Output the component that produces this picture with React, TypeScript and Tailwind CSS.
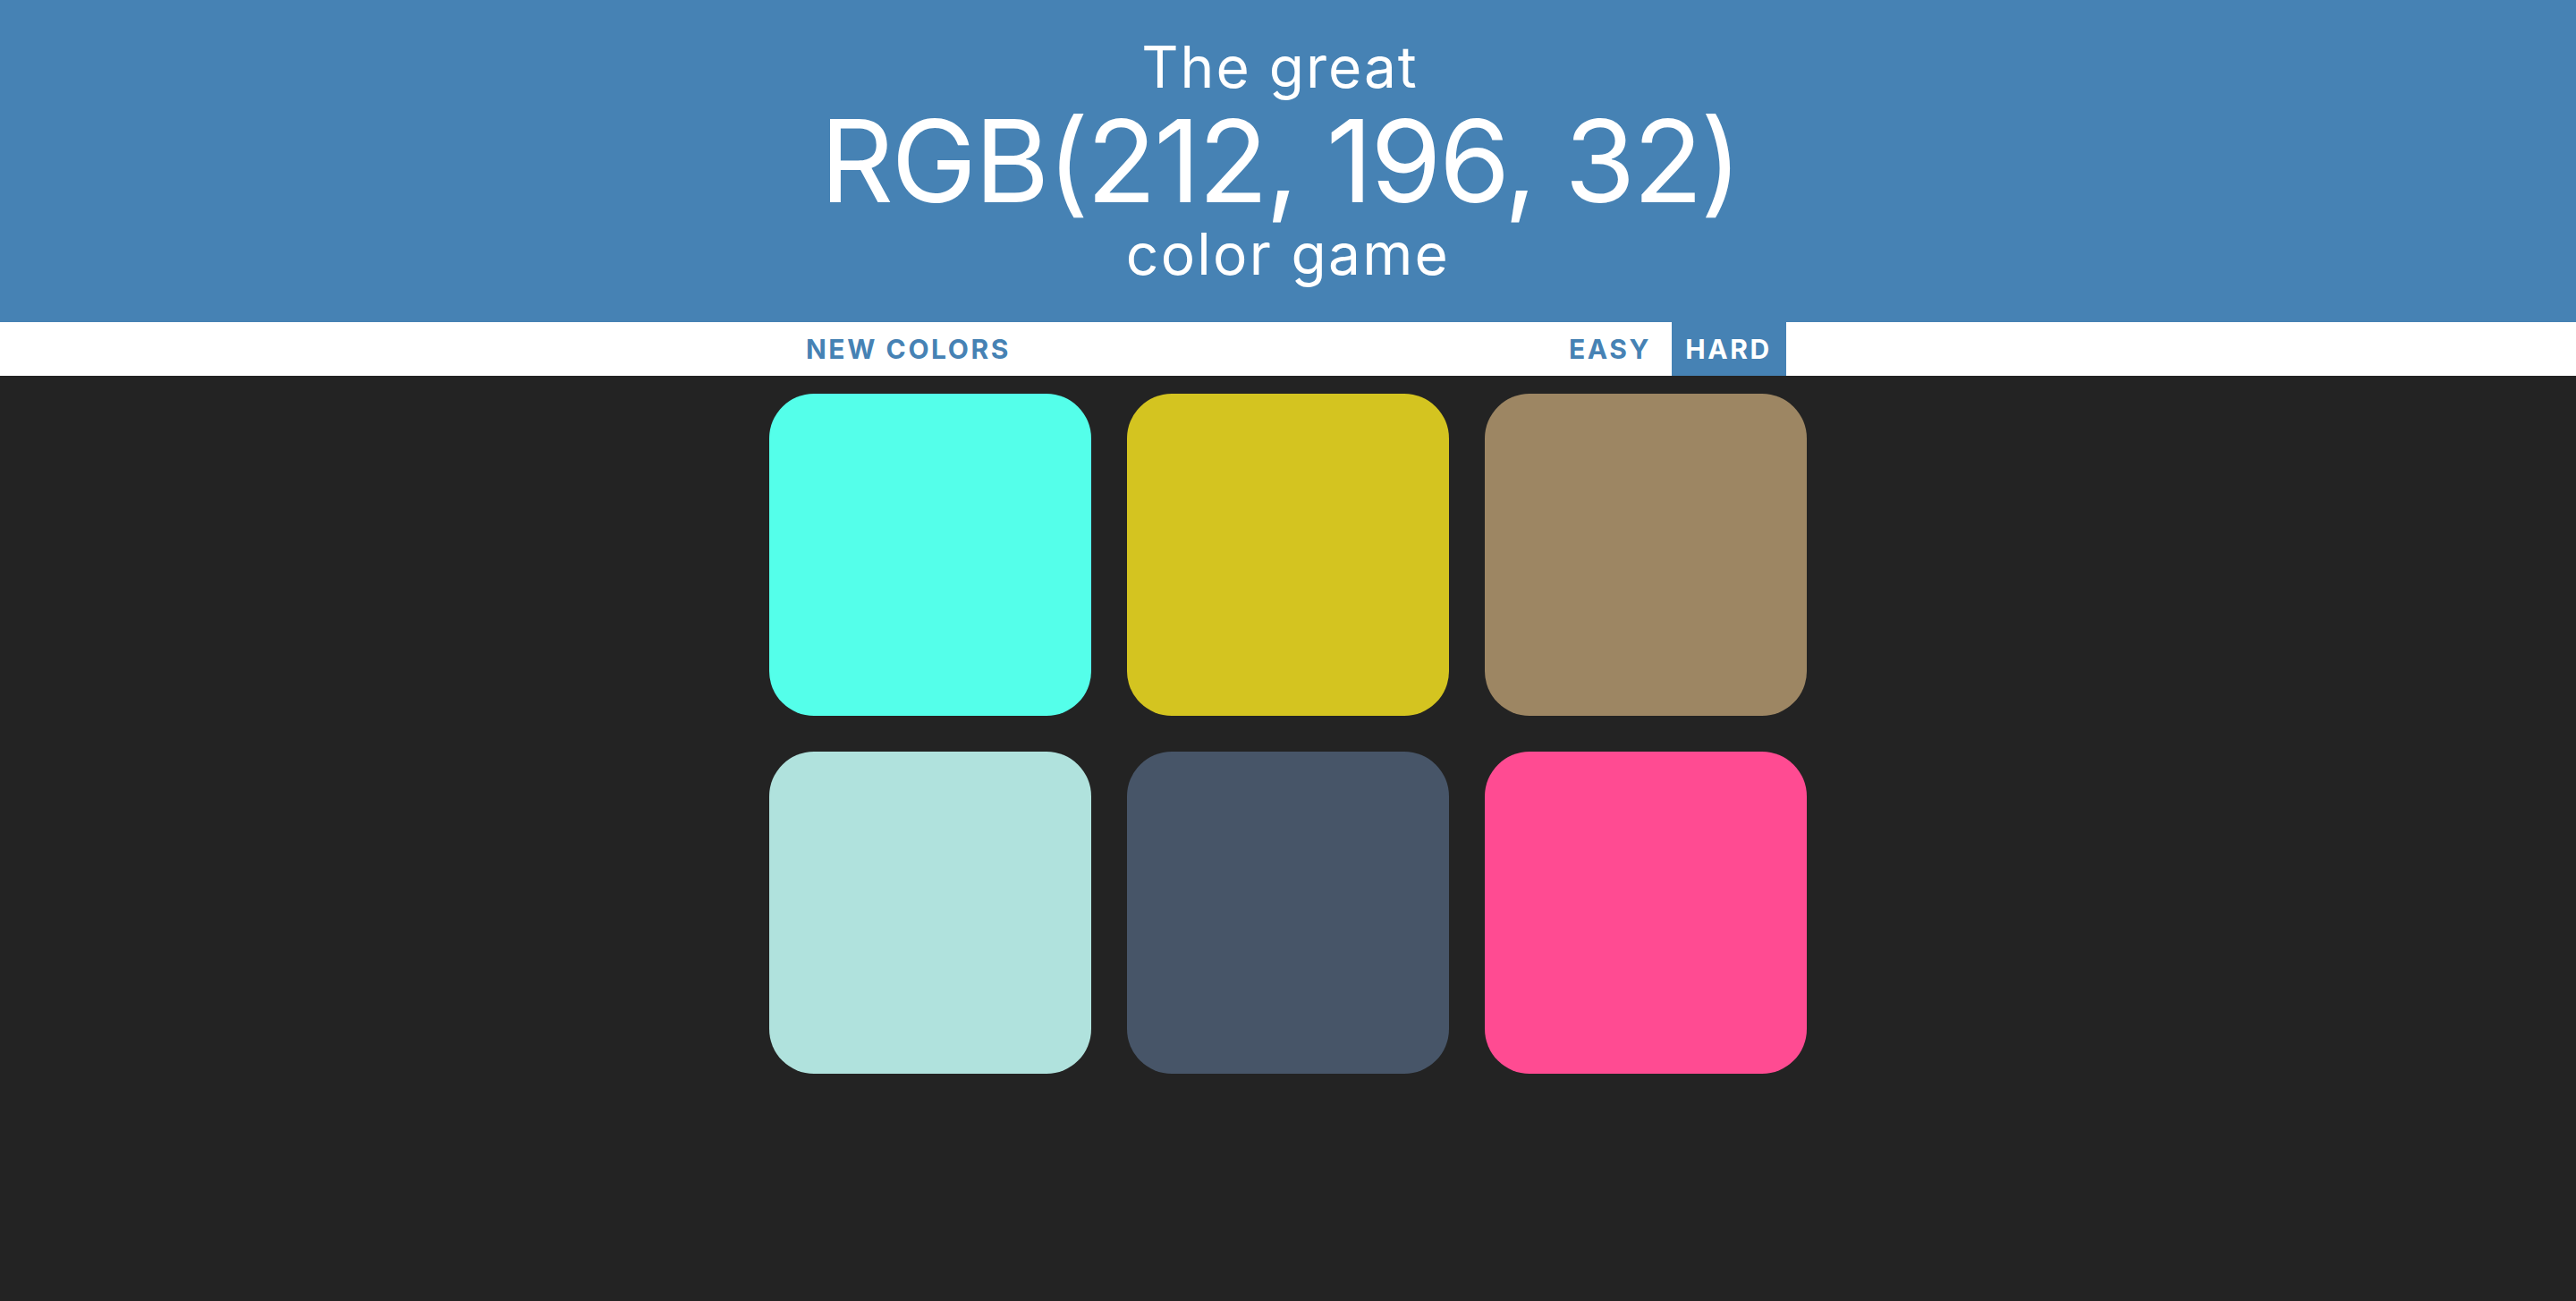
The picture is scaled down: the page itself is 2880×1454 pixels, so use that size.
const squares = ["#54ffea", "#d4c420", "#9d8663", "#b0e2dd", "#475568", "#ff4b92"];

export default function App() {
  return (
    <div className="min-h-[1454px] bg-[#232323]">
      <header
        className="flex h-[360px] flex-col items-center bg-[#4682b4] pt-[43px] text-white"
        style={{ fontFamily: "Inter, 'Open Sans', sans-serif" }}
      >
        <div className="mr-[18px] text-[64px] font-normal leading-none tracking-[2px]">The great</div>
        <div className="mt-[9px] mr-[18px] text-[128px] font-normal leading-none tracking-[-2.6px]">
          RGB(212, 196, 32)
        </div>
        <div className="mt-[8px] text-[64px] font-normal leading-none tracking-[2.3px]">color game</div>
      </header>

      <nav
        className="flex h-[60px] items-stretch justify-center bg-white text-[30px] font-bold tracking-[2.6px] text-[#4682b4]"
        style={{ fontFamily: "Inter, 'Liberation Sans', sans-serif" }}
      >
        <button className="w-[264px] uppercase">New Colors</button>
        <span className="w-[593px]" />
        <button className="w-[119px] uppercase">Easy</button>
        <span className="w-[9px]" />
        <button className="w-[128px] bg-[#4682b4] uppercase text-white">Hard</button>
      </nav>

      <main className="mx-auto flex w-[1200px] flex-wrap">
        {squares.map((c) => (
          <div key={c} className="m-[20px] h-[360px] w-[360px] rounded-[50px]" style={{ backgroundColor: c }} />
        ))}
      </main>
    </div>
  );
}
